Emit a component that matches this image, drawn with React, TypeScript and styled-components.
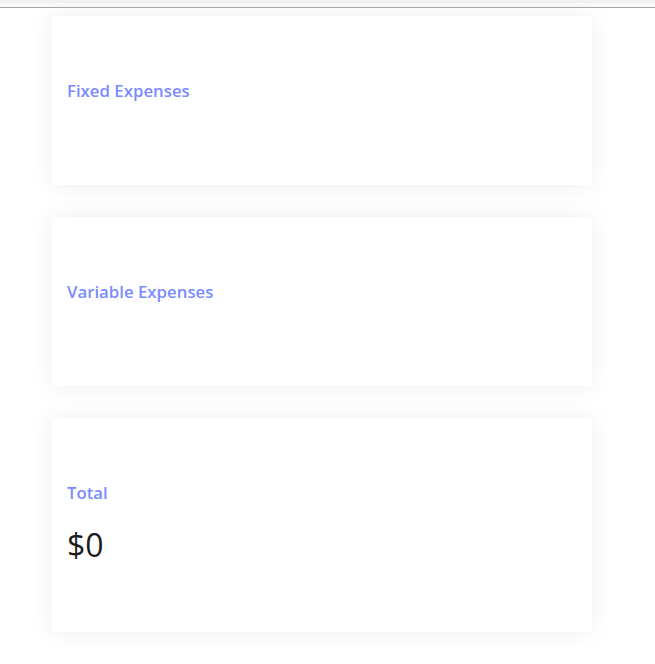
import React from 'react'
import styled, { createGlobalStyle } from 'styled-components'

const GlobalStyle = createGlobalStyle`
  html, body {
    margin: 0;
    padding: 0;
    background: #ffffff;
  }
  body {
    font-family: 'Open Sans', 'Noto Sans', sans-serif;
    color: #222;
  }
`

const TopBar = styled.div`
  height: 3px;
  background: #eff1f4;
  border-bottom: 4px solid #f9f9f9;
  box-shadow: 0 1px 0 #a9a9a9;
  margin-bottom: 1px;
`

const Page = styled.main`
  display: flex;
  flex-direction: column;
  gap: 32px;
  padding: 8px 0 32px 52px;
`

const Card = styled.section`
  width: 540px;
  box-sizing: border-box;
  background: #fff;
  padding: 63px 15px 58px;
  box-shadow: 0 0 22px rgba(0, 0, 0, 0.07);
`

const Title = styled.h3`
  margin: 0;
  font-size: 16.8px;
  line-height: 24px;
  font-weight: 600;
  color: #7b8bff;
`

const List = styled.ul`
  margin: 0;
  padding: 0;
  list-style: none;
  min-height: 24px;
`

const Amount = styled.div`
  margin-top: 10px;
  font-size: 32px;
  line-height: 59px;
  color: #1c1c1c;
`

const App = () => {
  return (
    <>
      <GlobalStyle />
      <TopBar />
      <Page>
        <Card>
          <Title>Fixed Expenses</Title>
          <List />
        </Card>
        <Card>
          <Title>Variable Expenses</Title>
          <List />
        </Card>
        <Card>
          <Title>Total</Title>
          <Amount>$0</Amount>
        </Card>
      </Page>
    </>
  )
}

export default App
